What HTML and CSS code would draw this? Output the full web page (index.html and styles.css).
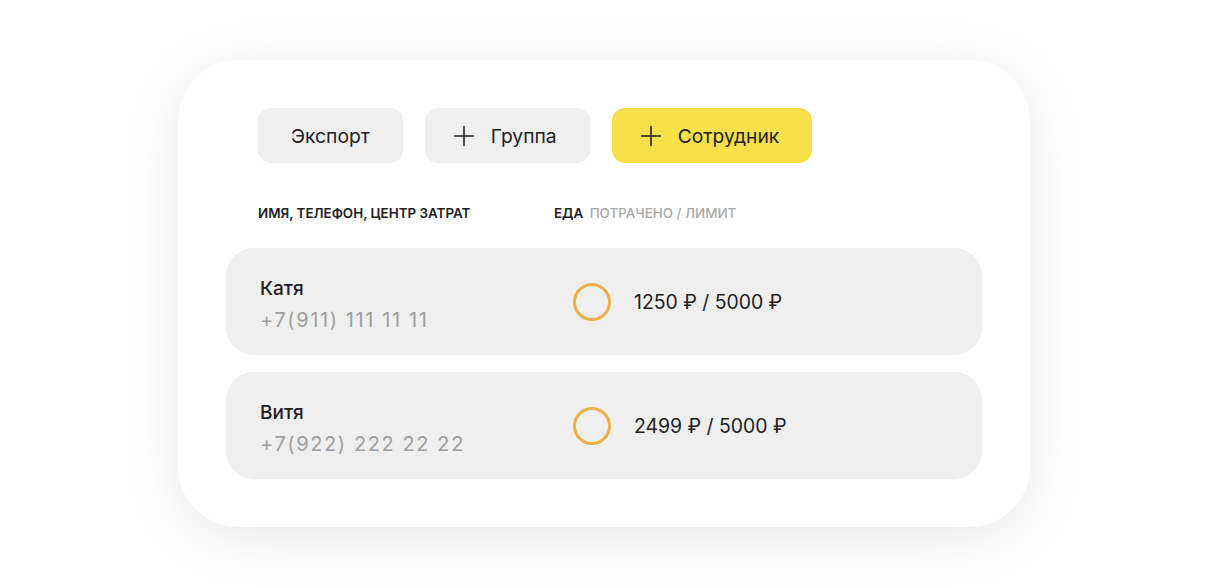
FILE: index.html
```html
<!DOCTYPE html>
<html lang="ru">
<head>
<meta charset="utf-8">
<link rel="stylesheet" href="styles.css">
</head>
<body>
<div class="card">
  <div class="actions">
    <button class="btn">Экспорт</button>
    <button class="btn btn-icon"><svg class="plus" width="22" height="22" viewBox="0 0 22 22"><path d="M11 1v20M1 11h20" stroke="#222" stroke-width="1.6" fill="none"/></svg>Группа</button>
    <button class="btn btn-icon btn-yellow"><svg class="plus" width="22" height="22" viewBox="0 0 22 22"><path d="M11 1v20M1 11h20" stroke="#222" stroke-width="1.6" fill="none"/></svg>Сотрудник</button>
  </div>
  <div class="head">
    <div class="col-name">ИМЯ, ТЕЛЕФОН, ЦЕНТР ЗАТРАТ</div>
    <div class="col-food">ЕДА <span class="muted">ПОТРАЧЕНО / ЛИМИТ</span></div>
  </div>
  <div class="rows">
    <div class="row">
      <div class="person">
        <div class="name">Катя</div>
        <div class="phone">+7(911) 111 11 11</div>
      </div>
      <div class="food">
        <span class="ring"></span>
        <span class="amount">1250 ₽ / 5000 ₽</span>
      </div>
    </div>
    <div class="row">
      <div class="person">
        <div class="name">Витя</div>
        <div class="phone">+7(922) 222 22 22</div>
      </div>
      <div class="food">
        <span class="ring"></span>
        <span class="amount">2499 ₽ / 5000 ₽</span>
      </div>
    </div>
  </div>
</div>
</body>
</html>
```
FILE: styles.css
```css
* { box-sizing: border-box; }
html, body { margin: 0; padding: 0; background: #fff; }
body {
  font-family: Inter, "Noto Sans", sans-serif;
  color: #21201f;
  padding: 60px 0 0 178px;
  height: 588px;
  overflow: hidden;
}
.card {
  width: 852px;
  height: 467px;
  background: #fff;
  border-radius: 60px;
  box-shadow: 0 10px 60px rgba(0,0,0,0.09);
  padding: 48px;
}
.actions {
  display: flex;
  gap: 22px;
  padding-left: 32px;
}
.btn {
  height: 55px;
  border: none;
  border-radius: 13px;
  background: #efefef;
  font-family: inherit;
  font-size: 19.3px;
  color: #21201f;
  display: flex;
  align-items: center;
  gap: 16px;
  padding: 0 33px;
}
.btn-icon { padding-left: 28px; }
.btn-yellow { background: #f8e04a; }
.head {
  display: flex;
  padding-left: 32px;
  margin-top: 42px;
  font-size: 13.4px;
  font-weight: 600;
  height: 17px;
  line-height: 17px;
}
.col-name { width: 296px; }
.muted { color: #a8a8a8; font-weight: 500; margin-left: 3px; }
.rows {
  margin-top: 26px;
  display: flex;
  flex-direction: column;
  gap: 17px;
}
.row {
  height: 107px;
  background: #efefef;
  border-radius: 28px;
  display: flex;
  align-items: center;
  padding-left: 34px;
}
.person { width: 313px; padding-top: 6px; }
.name { font-size: 19px; font-weight: 500; line-height: 24px; }
.phone { font-size: 20px; color: #9e9e9e; letter-spacing: 1.6px; line-height: 26px; margin-top: 6px; }
.food { display: flex; align-items: center; gap: 23px; }
.ring {
  width: 38px;
  height: 38px;
  border: 3.5px solid #ebb14a;
  border-radius: 50%;
}
.amount { font-size: 19.4px; }
```
